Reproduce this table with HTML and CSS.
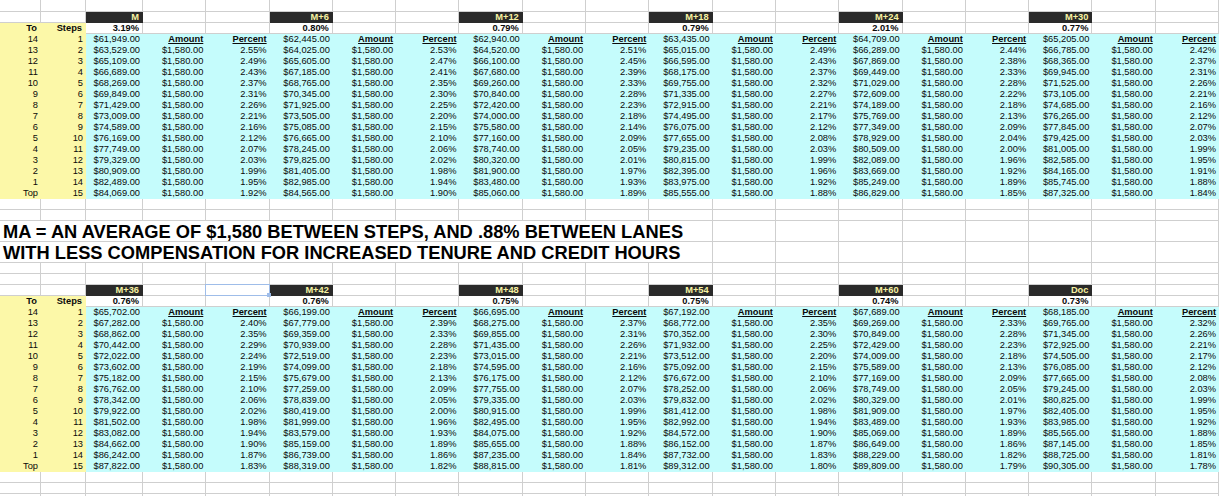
FILE: index.html
```html
<!DOCTYPE html>
<html lang="en">
<head>
<meta charset="utf-8">
<title>Salary schedule</title>
<link rel="stylesheet" href="styles.css">
</head>
<body>
<div class="sheet">
  <div class="row first"><span></span><span></span><span></span><span></span><span></span><span></span><span></span><span></span><span></span><span></span><span></span><span></span><span></span><span></span><span></span><span></span><span></span><span></span><span></span><span></span></div>
  <div class="row"><span></span><span></span><span class="lane">M</span><span></span><span></span><span class="lane">M+6</span><span></span><span></span><span class="lane">M+12</span><span></span><span></span><span class="lane">M+18</span><span></span><span></span><span class="lane">M+24</span><span></span><span></span><span class="lane">M+30</span><span></span><span></span></div>
  <div class="row pct"><span class="yl">To</span><span class="yl">Steps</span><span>3.19%</span><span></span><span></span><span>0.80%</span><span></span><span></span><span>0.79%</span><span></span><span></span><span>0.79%</span><span></span><span></span><span>2.01%</span><span></span><span></span><span>0.77%</span><span></span><span></span></div>
  <div class="row data"><span class="yl">14</span><span class="yl">1</span><span>$61,949.00</span><span class="hd">Amount</span><span class="hd">Percent</span><span>$62,445.00</span><span class="hd">Amount</span><span class="hd">Percent</span><span>$62,940.00</span><span class="hd">Amount</span><span class="hd">Percent</span><span>$63,435.00</span><span class="hd">Amount</span><span class="hd">Percent</span><span>$64,709.00</span><span class="hd">Amount</span><span class="hd">Percent</span><span>$65,205.00</span><span class="hd">Amount</span><span class="hd">Percent</span></div>
  <div class="row data"><span class="yl">13</span><span class="yl">2</span><span>$63,529.00</span><span>$1,580.00</span><span>2.55%</span><span>$64,025.00</span><span>$1,580.00</span><span>2.53%</span><span>$64,520.00</span><span>$1,580.00</span><span>2.51%</span><span>$65,015.00</span><span>$1,580.00</span><span>2.49%</span><span>$66,289.00</span><span>$1,580.00</span><span>2.44%</span><span>$66,785.00</span><span>$1,580.00</span><span>2.42%</span></div>
  <div class="row data"><span class="yl">12</span><span class="yl">3</span><span>$65,109.00</span><span>$1,580.00</span><span>2.49%</span><span>$65,605.00</span><span>$1,580.00</span><span>2.47%</span><span>$66,100.00</span><span>$1,580.00</span><span>2.45%</span><span>$66,595.00</span><span>$1,580.00</span><span>2.43%</span><span>$67,869.00</span><span>$1,580.00</span><span>2.38%</span><span>$68,365.00</span><span>$1,580.00</span><span>2.37%</span></div>
  <div class="row data"><span class="yl">11</span><span class="yl">4</span><span>$66,689.00</span><span>$1,580.00</span><span>2.43%</span><span>$67,185.00</span><span>$1,580.00</span><span>2.41%</span><span>$67,680.00</span><span>$1,580.00</span><span>2.39%</span><span>$68,175.00</span><span>$1,580.00</span><span>2.37%</span><span>$69,449.00</span><span>$1,580.00</span><span>2.33%</span><span>$69,945.00</span><span>$1,580.00</span><span>2.31%</span></div>
  <div class="row data"><span class="yl">10</span><span class="yl">5</span><span>$68,269.00</span><span>$1,580.00</span><span>2.37%</span><span>$68,765.00</span><span>$1,580.00</span><span>2.35%</span><span>$69,260.00</span><span>$1,580.00</span><span>2.33%</span><span>$69,755.00</span><span>$1,580.00</span><span>2.32%</span><span>$71,029.00</span><span>$1,580.00</span><span>2.28%</span><span>$71,525.00</span><span>$1,580.00</span><span>2.26%</span></div>
  <div class="row data"><span class="yl">9</span><span class="yl">6</span><span>$69,849.00</span><span>$1,580.00</span><span>2.31%</span><span>$70,345.00</span><span>$1,580.00</span><span>2.30%</span><span>$70,840.00</span><span>$1,580.00</span><span>2.28%</span><span>$71,335.00</span><span>$1,580.00</span><span>2.27%</span><span>$72,609.00</span><span>$1,580.00</span><span>2.22%</span><span>$73,105.00</span><span>$1,580.00</span><span>2.21%</span></div>
  <div class="row data"><span class="yl">8</span><span class="yl">7</span><span>$71,429.00</span><span>$1,580.00</span><span>2.26%</span><span>$71,925.00</span><span>$1,580.00</span><span>2.25%</span><span>$72,420.00</span><span>$1,580.00</span><span>2.23%</span><span>$72,915.00</span><span>$1,580.00</span><span>2.21%</span><span>$74,189.00</span><span>$1,580.00</span><span>2.18%</span><span>$74,685.00</span><span>$1,580.00</span><span>2.16%</span></div>
  <div class="row data"><span class="yl">7</span><span class="yl">8</span><span>$73,009.00</span><span>$1,580.00</span><span>2.21%</span><span>$73,505.00</span><span>$1,580.00</span><span>2.20%</span><span>$74,000.00</span><span>$1,580.00</span><span>2.18%</span><span>$74,495.00</span><span>$1,580.00</span><span>2.17%</span><span>$75,769.00</span><span>$1,580.00</span><span>2.13%</span><span>$76,265.00</span><span>$1,580.00</span><span>2.12%</span></div>
  <div class="row data"><span class="yl">6</span><span class="yl">9</span><span>$74,589.00</span><span>$1,580.00</span><span>2.16%</span><span>$75,085.00</span><span>$1,580.00</span><span>2.15%</span><span>$75,580.00</span><span>$1,580.00</span><span>2.14%</span><span>$76,075.00</span><span>$1,580.00</span><span>2.12%</span><span>$77,349.00</span><span>$1,580.00</span><span>2.09%</span><span>$77,845.00</span><span>$1,580.00</span><span>2.07%</span></div>
  <div class="row data"><span class="yl">5</span><span class="yl">10</span><span>$76,169.00</span><span>$1,580.00</span><span>2.12%</span><span>$76,665.00</span><span>$1,580.00</span><span>2.10%</span><span>$77,160.00</span><span>$1,580.00</span><span>2.09%</span><span>$77,655.00</span><span>$1,580.00</span><span>2.08%</span><span>$78,929.00</span><span>$1,580.00</span><span>2.04%</span><span>$79,425.00</span><span>$1,580.00</span><span>2.03%</span></div>
  <div class="row data"><span class="yl">4</span><span class="yl">11</span><span>$77,749.00</span><span>$1,580.00</span><span>2.07%</span><span>$78,245.00</span><span>$1,580.00</span><span>2.06%</span><span>$78,740.00</span><span>$1,580.00</span><span>2.05%</span><span>$79,235.00</span><span>$1,580.00</span><span>2.03%</span><span>$80,509.00</span><span>$1,580.00</span><span>2.00%</span><span>$81,005.00</span><span>$1,580.00</span><span>1.99%</span></div>
  <div class="row data"><span class="yl">3</span><span class="yl">12</span><span>$79,329.00</span><span>$1,580.00</span><span>2.03%</span><span>$79,825.00</span><span>$1,580.00</span><span>2.02%</span><span>$80,320.00</span><span>$1,580.00</span><span>2.01%</span><span>$80,815.00</span><span>$1,580.00</span><span>1.99%</span><span>$82,089.00</span><span>$1,580.00</span><span>1.96%</span><span>$82,585.00</span><span>$1,580.00</span><span>1.95%</span></div>
  <div class="row data"><span class="yl">2</span><span class="yl">13</span><span>$80,909.00</span><span>$1,580.00</span><span>1.99%</span><span>$81,405.00</span><span>$1,580.00</span><span>1.98%</span><span>$81,900.00</span><span>$1,580.00</span><span>1.97%</span><span>$82,395.00</span><span>$1,580.00</span><span>1.96%</span><span>$83,669.00</span><span>$1,580.00</span><span>1.92%</span><span>$84,165.00</span><span>$1,580.00</span><span>1.91%</span></div>
  <div class="row data"><span class="yl">1</span><span class="yl">14</span><span>$82,489.00</span><span>$1,580.00</span><span>1.95%</span><span>$82,985.00</span><span>$1,580.00</span><span>1.94%</span><span>$83,480.00</span><span>$1,580.00</span><span>1.93%</span><span>$83,975.00</span><span>$1,580.00</span><span>1.92%</span><span>$85,249.00</span><span>$1,580.00</span><span>1.89%</span><span>$85,745.00</span><span>$1,580.00</span><span>1.88%</span></div>
  <div class="row data"><span class="yl">Top</span><span class="yl">15</span><span>$84,069.00</span><span>$1,580.00</span><span>1.92%</span><span>$84,565.00</span><span>$1,580.00</span><span>1.90%</span><span>$85,060.00</span><span>$1,580.00</span><span>1.89%</span><span>$85,555.00</span><span>$1,580.00</span><span>1.88%</span><span>$86,829.00</span><span>$1,580.00</span><span>1.85%</span><span>$87,325.00</span><span>$1,580.00</span><span>1.84%</span></div>
  <div class="row"><span></span><span></span><span></span><span></span><span></span><span></span><span></span><span></span><span></span><span></span><span></span><span></span><span></span><span></span><span></span><span></span><span></span><span></span><span></span><span></span></div>
  <div class="row"><span></span><span></span><span></span><span></span><span></span><span></span><span></span><span></span><span></span><span></span><span></span><span></span><span></span><span></span><span></span><span></span><span></span><span></span><span></span><span></span></div>
  <div class="row note"><span class="note-text">MA = AN AVERAGE OF $1,580 BETWEEN STEPS, AND .88% BETWEEN LANES</span><span></span><span></span><span></span><span></span><span></span><span></span><span></span><span></span></div>
  <div class="row note"><span class="note-text">WITH LESS COMPENSATION FOR INCREASED TENURE AND CREDIT HOURS</span><span></span><span></span><span></span><span></span><span></span><span></span><span></span><span></span></div>
  <div class="row"><span></span><span></span><span></span><span></span><span></span><span></span><span></span><span></span><span></span><span></span><span></span><span></span><span></span><span></span><span></span><span></span><span></span><span></span><span></span><span></span></div>
  <div class="row"><span></span><span></span><span></span><span></span><span></span><span></span><span></span><span></span><span></span><span></span><span></span><span></span><span></span><span></span><span></span><span></span><span></span><span></span><span></span><span></span></div>
  <div class="row"><span></span><span></span><span class="lane">M+36</span><span></span><span class="sel"></span><span class="lane">M+42</span><span></span><span></span><span class="lane">M+48</span><span></span><span></span><span class="lane">M+54</span><span></span><span></span><span class="lane">M+60</span><span></span><span></span><span class="lane">Doc</span><span></span><span></span></div>
  <div class="row pct"><span class="yl">To</span><span class="yl">Steps</span><span>0.76%</span><span></span><span></span><span>0.76%</span><span></span><span></span><span>0.75%</span><span></span><span></span><span>0.75%</span><span></span><span></span><span>0.74%</span><span></span><span></span><span>0.73%</span><span></span><span></span></div>
  <div class="row data"><span class="yl">14</span><span class="yl">1</span><span>$65,702.00</span><span class="hd">Amount</span><span class="hd">Percent</span><span>$66,199.00</span><span class="hd">Amount</span><span class="hd">Percent</span><span>$66,695.00</span><span class="hd">Amount</span><span class="hd">Percent</span><span>$67,192.00</span><span class="hd">Amount</span><span class="hd">Percent</span><span>$67,689.00</span><span class="hd">Amount</span><span class="hd">Percent</span><span>$68,185.00</span><span class="hd">Amount</span><span class="hd">Percent</span></div>
  <div class="row data"><span class="yl">13</span><span class="yl">2</span><span>$67,282.00</span><span>$1,580.00</span><span>2.40%</span><span>$67,779.00</span><span>$1,580.00</span><span>2.39%</span><span>$68,275.00</span><span>$1,580.00</span><span>2.37%</span><span>$68,772.00</span><span>$1,580.00</span><span>2.35%</span><span>$69,269.00</span><span>$1,580.00</span><span>2.33%</span><span>$69,765.00</span><span>$1,580.00</span><span>2.32%</span></div>
  <div class="row data"><span class="yl">12</span><span class="yl">3</span><span>$68,862.00</span><span>$1,580.00</span><span>2.35%</span><span>$69,359.00</span><span>$1,580.00</span><span>2.33%</span><span>$69,855.00</span><span>$1,580.00</span><span>2.31%</span><span>$70,352.00</span><span>$1,580.00</span><span>2.30%</span><span>$70,849.00</span><span>$1,580.00</span><span>2.28%</span><span>$71,345.00</span><span>$1,580.00</span><span>2.26%</span></div>
  <div class="row data"><span class="yl">11</span><span class="yl">4</span><span>$70,442.00</span><span>$1,580.00</span><span>2.29%</span><span>$70,939.00</span><span>$1,580.00</span><span>2.28%</span><span>$71,435.00</span><span>$1,580.00</span><span>2.26%</span><span>$71,932.00</span><span>$1,580.00</span><span>2.25%</span><span>$72,429.00</span><span>$1,580.00</span><span>2.23%</span><span>$72,925.00</span><span>$1,580.00</span><span>2.21%</span></div>
  <div class="row data"><span class="yl">10</span><span class="yl">5</span><span>$72,022.00</span><span>$1,580.00</span><span>2.24%</span><span>$72,519.00</span><span>$1,580.00</span><span>2.23%</span><span>$73,015.00</span><span>$1,580.00</span><span>2.21%</span><span>$73,512.00</span><span>$1,580.00</span><span>2.20%</span><span>$74,009.00</span><span>$1,580.00</span><span>2.18%</span><span>$74,505.00</span><span>$1,580.00</span><span>2.17%</span></div>
  <div class="row data"><span class="yl">9</span><span class="yl">6</span><span>$73,602.00</span><span>$1,580.00</span><span>2.19%</span><span>$74,099.00</span><span>$1,580.00</span><span>2.18%</span><span>$74,595.00</span><span>$1,580.00</span><span>2.16%</span><span>$75,092.00</span><span>$1,580.00</span><span>2.15%</span><span>$75,589.00</span><span>$1,580.00</span><span>2.13%</span><span>$76,085.00</span><span>$1,580.00</span><span>2.12%</span></div>
  <div class="row data"><span class="yl">8</span><span class="yl">7</span><span>$75,182.00</span><span>$1,580.00</span><span>2.15%</span><span>$75,679.00</span><span>$1,580.00</span><span>2.13%</span><span>$76,175.00</span><span>$1,580.00</span><span>2.12%</span><span>$76,672.00</span><span>$1,580.00</span><span>2.10%</span><span>$77,169.00</span><span>$1,580.00</span><span>2.09%</span><span>$77,665.00</span><span>$1,580.00</span><span>2.08%</span></div>
  <div class="row data"><span class="yl">7</span><span class="yl">8</span><span>$76,762.00</span><span>$1,580.00</span><span>2.10%</span><span>$77,259.00</span><span>$1,580.00</span><span>2.09%</span><span>$77,755.00</span><span>$1,580.00</span><span>2.07%</span><span>$78,252.00</span><span>$1,580.00</span><span>2.06%</span><span>$78,749.00</span><span>$1,580.00</span><span>2.05%</span><span>$79,245.00</span><span>$1,580.00</span><span>2.03%</span></div>
  <div class="row data"><span class="yl">6</span><span class="yl">9</span><span>$78,342.00</span><span>$1,580.00</span><span>2.06%</span><span>$78,839.00</span><span>$1,580.00</span><span>2.05%</span><span>$79,335.00</span><span>$1,580.00</span><span>2.03%</span><span>$79,832.00</span><span>$1,580.00</span><span>2.02%</span><span>$80,329.00</span><span>$1,580.00</span><span>2.01%</span><span>$80,825.00</span><span>$1,580.00</span><span>1.99%</span></div>
  <div class="row data"><span class="yl">5</span><span class="yl">10</span><span>$79,922.00</span><span>$1,580.00</span><span>2.02%</span><span>$80,419.00</span><span>$1,580.00</span><span>2.00%</span><span>$80,915.00</span><span>$1,580.00</span><span>1.99%</span><span>$81,412.00</span><span>$1,580.00</span><span>1.98%</span><span>$81,909.00</span><span>$1,580.00</span><span>1.97%</span><span>$82,405.00</span><span>$1,580.00</span><span>1.95%</span></div>
  <div class="row data"><span class="yl">4</span><span class="yl">11</span><span>$81,502.00</span><span>$1,580.00</span><span>1.98%</span><span>$81,999.00</span><span>$1,580.00</span><span>1.96%</span><span>$82,495.00</span><span>$1,580.00</span><span>1.95%</span><span>$82,992.00</span><span>$1,580.00</span><span>1.94%</span><span>$83,489.00</span><span>$1,580.00</span><span>1.93%</span><span>$83,985.00</span><span>$1,580.00</span><span>1.92%</span></div>
  <div class="row data"><span class="yl">3</span><span class="yl">12</span><span>$83,082.00</span><span>$1,580.00</span><span>1.94%</span><span>$83,579.00</span><span>$1,580.00</span><span>1.93%</span><span>$84,075.00</span><span>$1,580.00</span><span>1.92%</span><span>$84,572.00</span><span>$1,580.00</span><span>1.90%</span><span>$85,069.00</span><span>$1,580.00</span><span>1.89%</span><span>$85,565.00</span><span>$1,580.00</span><span>1.88%</span></div>
  <div class="row data"><span class="yl">2</span><span class="yl">13</span><span>$84,662.00</span><span>$1,580.00</span><span>1.90%</span><span>$85,159.00</span><span>$1,580.00</span><span>1.89%</span><span>$85,655.00</span><span>$1,580.00</span><span>1.88%</span><span>$86,152.00</span><span>$1,580.00</span><span>1.87%</span><span>$86,649.00</span><span>$1,580.00</span><span>1.86%</span><span>$87,145.00</span><span>$1,580.00</span><span>1.85%</span></div>
  <div class="row data"><span class="yl">1</span><span class="yl">14</span><span>$86,242.00</span><span>$1,580.00</span><span>1.87%</span><span>$86,739.00</span><span>$1,580.00</span><span>1.86%</span><span>$87,235.00</span><span>$1,580.00</span><span>1.84%</span><span>$87,732.00</span><span>$1,580.00</span><span>1.83%</span><span>$88,229.00</span><span>$1,580.00</span><span>1.82%</span><span>$88,725.00</span><span>$1,580.00</span><span>1.81%</span></div>
  <div class="row data"><span class="yl">Top</span><span class="yl">15</span><span>$87,822.00</span><span>$1,580.00</span><span>1.83%</span><span>$88,319.00</span><span>$1,580.00</span><span>1.82%</span><span>$88,815.00</span><span>$1,580.00</span><span>1.81%</span><span>$89,312.00</span><span>$1,580.00</span><span>1.80%</span><span>$89,809.00</span><span>$1,580.00</span><span>1.79%</span><span>$90,305.00</span><span>$1,580.00</span><span>1.78%</span></div>
  <div class="row"><span></span><span></span><span></span><span></span><span></span><span></span><span></span><span></span><span></span><span></span><span></span><span></span><span></span><span></span><span></span><span></span><span></span><span></span><span></span><span></span></div>
  <div class="row"><span></span><span></span><span></span><span></span><span></span><span></span><span></span><span></span><span></span><span></span><span></span><span></span><span></span><span></span><span></span><span></span><span></span><span></span><span></span><span></span></div>
  <div class="row"><span></span><span></span><span></span><span></span><span></span><span></span><span></span><span></span><span></span><span></span><span></span><span></span><span></span><span></span><span></span><span></span><span></span><span></span><span></span><span></span></div>
</div>
</body>
</html>
```

FILE: styles.css
```css
* {
  box-sizing: border-box;
  margin: 0;
  padding: 0;
}

html, body {
  margin: 0;
  background: #ffffff;
}

body {
  width: 1220px;
  height: 496px;
  overflow: hidden;
  font-family: "Liberation Sans", Arial, sans-serif;
  color: #000000;
}

.sheet {
  width: 1220px;
}

.row {
  display: grid;
  grid-template-columns: 41px 45px 57px repeat(17, 63.3px);
  height: 11px;
}

.row > span {
  display: block;
  border-right: 1px solid #cfcfcf;
  border-bottom: 1px solid #cfcfcf;
  font-size: 9.3px;
  line-height: 10px;
  text-align: right;
  padding-right: 3px;
  white-space: nowrap;
  overflow: hidden;
  color: #0a0a0a;
}

.row.first {
  height: 12px;
}

.row > .lane {
  background: #2a2a2a;
  border-color: #2a2a2a;
  color: #f7f2a2;
  font-weight: bold;
}

.pct > span {
  font-weight: bold;
}

.pct > .yl {
  background: #fcf8a8;
  border-color: #fcf8a8;
}

.data > span {
  background: #c5fcfc;
  border: none;
  line-height: 11px;
}

.data > .yl {
  background: #fcf8a8;
}

.data > .hd {
  font-weight: bold;
  text-decoration: underline;
}

.row.note {
  height: 21px;
}

.row.note > span {
  height: 21px;
}

.row.note > .note-text {
  grid-column: 1 / span 12;
  font-size: 18.3px;
  font-weight: bold;
  line-height: 21px;
  text-align: left;
  padding-left: 3px;
  padding-right: 0;
  overflow: visible;
  color: #000000;
}

.row > .sel {
  position: relative;
  overflow: visible;
}

.sel::after {
  content: "";
  position: absolute;
  left: -1px;
  top: -1px;
  right: -1px;
  bottom: -1px;
  border: 1px solid #9fbde9;
}

.sel::before {
  content: "";
  position: absolute;
  right: -2px;
  bottom: -2px;
  width: 4px;
  height: 4px;
  background: #9fbde9;
  z-index: 1;
}
```
